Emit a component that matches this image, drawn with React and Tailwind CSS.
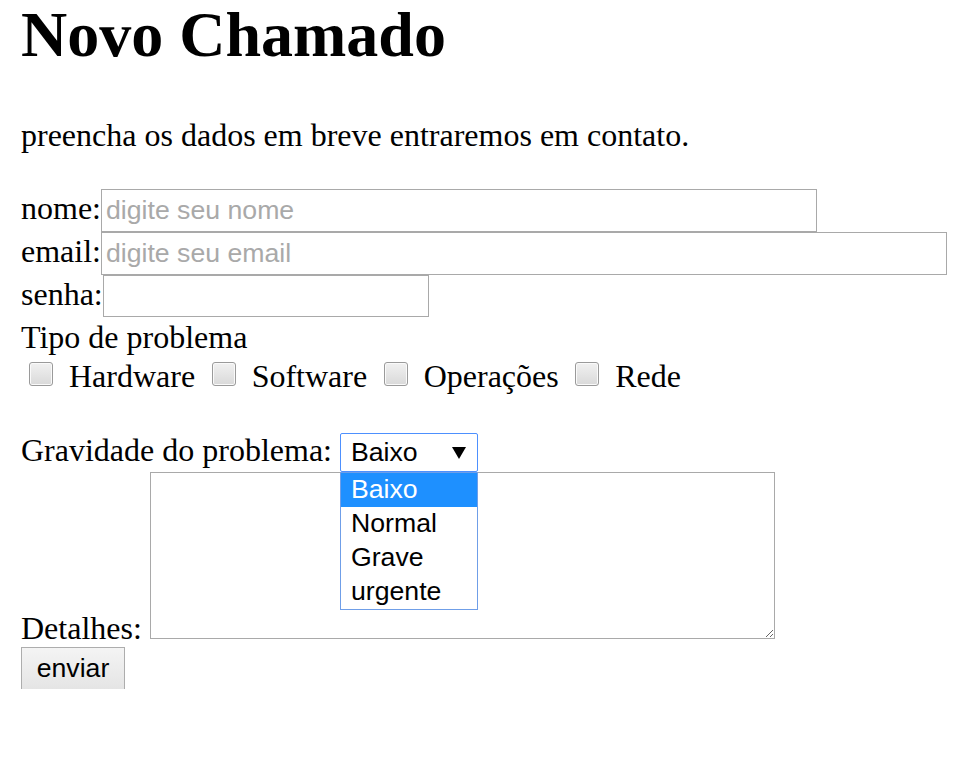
import React from 'react'

const sans = "font-['Liberation_Sans',Arial,sans-serif] text-[26.67px]"
const options = ['Baixo', 'Normal', 'Grave', 'urgente']
const tipos = ['Hardware', 'Software', 'Operações', 'Rede']

function Box({ first }) {
  return (
    <span
      className={
        'mt-[7px] w-[24px] h-[24px] shrink-0 rounded-[3px] border border-[#9a9a9a] bg-linear-to-b from-[#f1f1f1] to-[#d9d9d9] shadow-[inset_0_0_0_1px_#fafafa] ' +
        (first ? 'ml-[8px]' : 'ml-[16.5px]')
      }
    />
  )
}

export default function App() {
  return (
    <div className="min-h-screen bg-white text-black pl-[21px] font-['Liberation_Serif','Times_New_Roman',serif]">
      <h1 className="pt-[1px] text-[64px] font-bold leading-[67px]">Novo Chamado</h1>
      <p className="mt-[49px] text-[32px] leading-[37px]">preencha os dados em breve entraremos em contato.</p>

      <form className="mt-[35px] text-[32px] leading-[37px]">
        <div className="flex items-baseline h-[43px]">
          <label>nome:</label>
          <input
            placeholder="digite seu nome"
            className={sans + ' w-[716px] h-[43px] pl-[4px] border border-[#a9a9a9] placeholder:text-[#a9a9a9] outline-none'}
          />
        </div>
        <div className="flex items-baseline h-[43px]">
          <label>email:</label>
          <input
            placeholder="digite seu email"
            className={sans + ' w-[846px] h-[43px] pl-[4px] border border-[#a9a9a9] placeholder:text-[#a9a9a9] outline-none'}
          />
        </div>
        <div className="flex items-baseline h-[42px]">
          <label>senha:</label>
          <input
            type="password"
            className={sans + ' w-[326px] h-[42px] pl-[4px] border border-[#a9a9a9] outline-none'}
          />
        </div>

        <div className="pt-[3px] leading-[35px]">Tipo de problema</div>
        <div className="flex items-start h-[37px]">
          {tipos.map((t, i) => (
            <React.Fragment key={t}>
              <Box first={i === 0} />
              <span className="ml-[16px] mt-[3px]">{t}</span>
            </React.Fragment>
          ))}
        </div>

        <div className="mt-[40px] flex items-baseline">
          <label className="mr-[8px]">Gravidade do problema:</label>
          <div className="relative">
            <div className={sans + ' flex items-center justify-between w-[138px] h-[39px] pl-[10px] pr-[11px] border border-[#4d90fe] rounded-[2px] bg-white'}>
              <span>Baixo</span>
              <svg width="14" height="12" viewBox="0 0 14 12">
                <polygon points="0,0 14,0 7,12" fill="#000" />
              </svg>
            </div>
            <div className={sans + ' absolute left-0 top-[39px] z-10 w-[138px] border border-[#6f9ee8] bg-white'}>
              {options.map((o, i) => (
                <div
                  key={o}
                  className={'h-[34px] leading-[32px] pl-[10px] ' + (i === 0 ? 'bg-[#1e90ff] text-white' : '')}
                >
                  {o}
                </div>
              ))}
            </div>
          </div>
        </div>

        <div className="flex items-end h-[175px]">
          <label className="mr-[8px]">Detalhes:</label>
          <textarea className="self-start w-[625px] h-[167px] border border-[#a9a9a9] outline-none" />
        </div>

        <div className="h-[42px] overflow-hidden">
          <button
            type="button"
            className={sans + ' w-[104px] h-[45px] pb-[3px] border border-[#adadad] bg-linear-to-b from-[#f4f4f4] to-[#e4e4e4] leading-none'}
          >
            enviar
          </button>
        </div>
      </form>
    </div>
  )
}
